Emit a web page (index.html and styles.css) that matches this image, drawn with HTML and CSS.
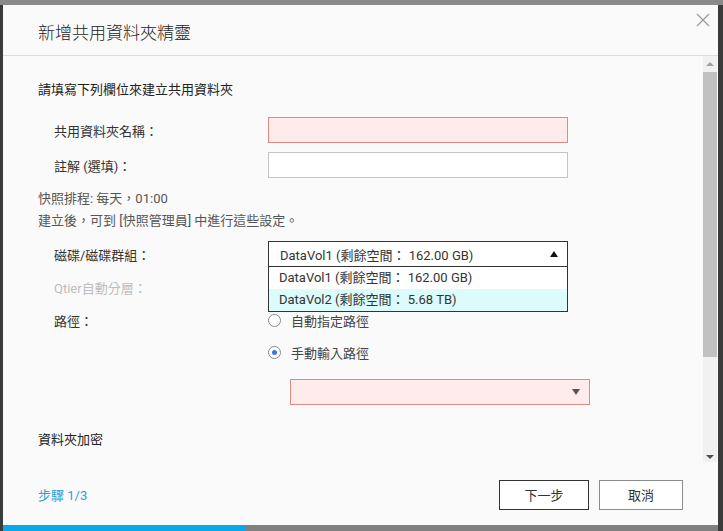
FILE: index.html
```html
<!DOCTYPE html>
<html lang="zh-Hant">

<head>
    <meta charset="UTF-8">
    <meta name="viewport" content="width=device-width, initial-scale=1">
    <title>新增共用資料夾精靈</title>
    <link rel="stylesheet" href="styles.css">
</head>

<body>
    <div class="dialog">
        <div class="dialog-header">
            <h1>新增共用資料夾精靈</h1>
            <span class="close-btn">
                <svg width="14" height="14" viewBox="0 0 14 14">
                    <path d="M1 1 L13 13 M13 1 L1 13" stroke="#9a9a9a" stroke-width="1.2" fill="none" />
                </svg>
            </span>
        </div>

        <div class="dialog-body">
            <div class="content">
                <h2 class="section-title">請填寫下列欄位來建立共用資料夾</h2>

                <div class="form-row first">
                    <label>共用資料夾名稱：</label>
                    <div class="field error"></div>
                </div>
                <div class="form-row">
                    <label>註解 (選填)：</label>
                    <div class="field"></div>
                </div>

                <p class="note first">快照排程: 每天，01:00</p>
                <p class="note">建立後，可到 [快照管理員] 中進行這些設定。</p>

                <div class="form-row select-row">
                    <label>磁碟/磁碟群組：</label>
                    <div class="select-wrap">
                        <div class="field select open">
                            <span>DataVol1 (剩餘空間： 162.00 GB)</span>
                            <i class="arrow up"></i>
                        </div>
                        <ul class="dropdown">
                            <li>DataVol1 (剩餘空間： 162.00 GB)</li>
                            <li class="hover">DataVol2 (剩餘空間： 5.68 TB)</li>
                        </ul>
                    </div>
                </div>

                <div class="line-row qtier">
                    <label class="disabled">Qtier自動分層：</label>
                </div>
                <div class="line-row path">
                    <label>路徑：</label>
                    <span class="radio"></span>
                    <span class="radio-text">自動指定路徑</span>
                </div>
                <div class="line-row manual">
                    <label></label>
                    <span class="radio checked"></span>
                    <span class="radio-text">手動輸入路徑</span>
                </div>

                <div class="path-select">
                    <div class="field select error wide">
                        <span></span>
                        <i class="arrow down"></i>
                    </div>
                </div>

                <h2 class="section-title encrypt">資料夾加密</h2>
            </div>

            <div class="scrollbar">
                <div class="sb-btn"><i class="sb-arrow up"></i></div>
                <div class="sb-thumb"></div>
                <div class="sb-track"></div>
                <div class="sb-btn"><i class="sb-arrow down"></i></div>
            </div>
        </div>

        <div class="dialog-footer">
            <span class="step">步驟 1/3</span>
            <div class="buttons">
                <button class="btn primary">下一步</button>
                <button class="btn">取消</button>
            </div>
        </div>

        <div class="progress">
            <div class="progress-bar" style="width: 34%"></div>
        </div>
    </div>
</body>

</html>
```

FILE: styles.css
```css
body,
h1,
h2,
p,
ul,
li {
    margin: 0;
    padding: 0;
}

html {
    background: linear-gradient(#8a8a8a 0 5px, #3b3b3b 5px);
}

body {
    font-family: 'Roboto', 'Noto Sans CJK TC', sans-serif;
    font-size: 13px;
    color: #333;
    height: 531px;
    overflow: hidden;
    padding: 5px 0 0 3px;
    box-sizing: border-box;
}

.dialog {
    width: 715px;
    height: 526px;
    background: #fafafa;
    display: flex;
    flex-direction: column;
}

/* header */
.dialog-header {
    position: relative;
    height: 50px;
    border-bottom: 1px solid #dcdcdc;
    display: flex;
    align-items: center;
    padding-left: 35px;
    flex-shrink: 0;
}

.dialog-header h1 {
    font-family: 'Noto Sans CJK TC', sans-serif;
    font-size: 17px;
    font-weight: 300;
    color: #222;
    padding-top: 2px;
}

.close-btn {
    position: absolute;
    right: 8px;
    top: 8px;
    width: 14px;
    height: 14px;
}

/* body */
.dialog-body {
    flex: 1;
    display: flex;
    min-height: 0;
    overflow: hidden;
}

.content {
    flex: 1;
    padding: 23px 0 0 35px;
}

.section-title {
    font-family: 'Noto Sans CJK TC', sans-serif;
    font-size: 13px;
    font-weight: 400;
    color: #222;
    line-height: 20px;
}

.section-title.encrypt {
    margin-top: 24px;
}

.form-row {
    display: flex;
    align-items: center;
    height: 26px;
    margin-top: 9px;
    padding-left: 16px;
}

.form-row.first {
    margin-top: 18px;
}

.form-row label,
.line-row label {
    width: 214px;
    flex-shrink: 0;
    color: #333;
}

.field {
    width: 300px;
    height: 26px;
    box-sizing: border-box;
    border: 1px solid #c4c4c4;
    background: #fff;
}

.field.error {
    background: #ffebeb;
    border-color: #e28a82;
}

.note {
    line-height: 22px;
    color: #555;
}

.note.first {
    margin-top: 10px;
}

.select-row {
    margin-top: 9px;
}

.select-wrap {
    position: relative;
}

.select {
    display: flex;
    align-items: center;
    justify-content: space-between;
    padding: 0 9px 0 11px;
}

.select.open {
    border-color: #333;
}

.select span {
    color: #333;
}

.arrow {
    width: 0;
    height: 0;
    border-left: 4px solid transparent;
    border-right: 4px solid transparent;
}

.arrow.up {
    border-bottom: 6px solid #111;
}

.arrow.down {
    border-top: 6px solid #555;
}

.dropdown {
    position: absolute;
    top: 26px;
    left: 0;
    width: 300px;
    box-sizing: border-box;
    list-style: none;
    background: #fff;
    border: 1px solid #333;
    border-top: none;
    z-index: 2;
}

.dropdown li {
    height: 22px;
    line-height: 22px;
    padding-left: 10px;
}

.dropdown li.hover {
    background: #dcfbfb;
}

.line-row {
    display: flex;
    align-items: center;
    height: 22px;
    padding-left: 16px;
}

.line-row.qtier {
    margin-top: 9px;
}

.line-row.path {
    margin-top: 11px;
}

.line-row.manual {
    margin-top: 10px;
}

label.disabled {
    color: #bdbdbd;
}

.radio {
    width: 11px;
    height: 11px;
    border: 1px solid #888;
    border-radius: 50%;
    background: #fff;
    position: relative;
    flex-shrink: 0;
}

.radio.checked::after {
    content: '';
    position: absolute;
    left: 3px;
    top: 3px;
    width: 5px;
    height: 5px;
    border-radius: 50%;
    background: #3b76d8;
}

.radio-text {
    margin-left: 10px;
    color: #444;
}

.path-select {
    margin-top: 16px;
    padding-left: 252px;
}

.wide {
    width: 300px;
}

/* fake scrollbar */
.scrollbar {
    width: 14px;
    margin-right: 1px;
    display: flex;
    flex-direction: column;
    background: #f1f1f1;
    height: 409px;
}

.sb-btn {
    height: 16px;
    display: flex;
    align-items: center;
    justify-content: center;
}

.sb-arrow {
    width: 0;
    height: 0;
    border-left: 4px solid transparent;
    border-right: 4px solid transparent;
}

.sb-arrow.up {
    border-bottom: 4px solid #a3a3a3;
}

.sb-arrow.down {
    border-top: 4px solid #505050;
}

.sb-thumb {
    height: 285px;
    background: #c1c1c1;
}

.sb-track {
    flex: 1;
}

/* footer */
.dialog-footer {
    height: 63px;
    display: flex;
    align-items: center;
    justify-content: space-between;
    padding: 0 35px;
    flex-shrink: 0;
}

.step {
    color: #2aa0d8;
    padding-top: 2px;
}

.buttons {
    display: flex;
    gap: 10px;
    padding-top: 2px;
}

.btn {
    font-family: 'Noto Sans CJK TC', sans-serif;
    font-size: 13px;
    height: 30px;
    width: 84px;
    background: #fff;
    border: 1px solid #8c8c8c;
    color: #333;
    cursor: pointer;
}

.btn.primary {
    width: 90px;
    border-color: #333;
}

.progress {
    height: 6px;
    background: #808080;
    flex-shrink: 0;
}

.progress-bar {
    height: 100%;
    background: #0aa8e8;
}
```
